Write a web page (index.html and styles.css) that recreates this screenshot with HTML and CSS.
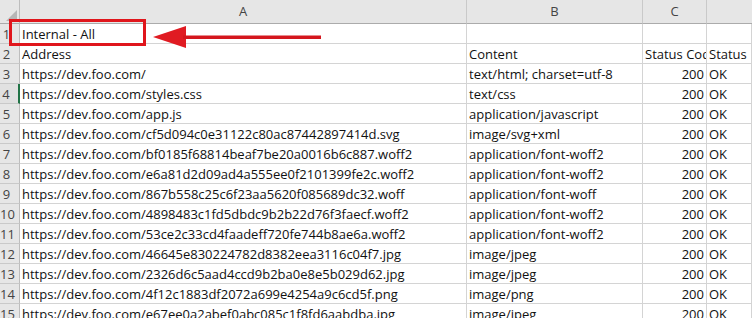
FILE: index.html
```html
<!DOCTYPE html>
<html lang="en">
<head>
  <meta charset="UTF-8">
  <title>Internal - All</title>
  <link rel="stylesheet" href="styles.css">
</head>
<body>
  <div class="sheet">
    <div class="corner"><span class="corner-mark"></span></div>
    <div class="colhead">A</div>
    <div class="colhead">B</div>
    <div class="colhead">C</div>
    <div class="colhead last"></div>

    <div class="rowhead">1</div>
    <div class="cell">Internal - All</div>
    <div class="cell"></div>
    <div class="cell"></div>
    <div class="cell"></div>

    <div class="rowhead">2</div>
    <div class="cell">Address</div>
    <div class="cell">Content</div>
    <div class="cell">Status Code</div>
    <div class="cell">Status</div>

    <div class="rowhead">3</div>
    <div class="cell">https://dev.foo.com/</div>
    <div class="cell">text/html; charset=utf-8</div>
    <div class="cell num">200</div>
    <div class="cell">OK</div>

    <div class="rowhead active">4</div>
    <div class="cell">https://dev.foo.com/styles.css</div>
    <div class="cell">text/css</div>
    <div class="cell num">200</div>
    <div class="cell">OK</div>

    <div class="rowhead">5</div>
    <div class="cell">https://dev.foo.com/app.js</div>
    <div class="cell">application/javascript</div>
    <div class="cell num">200</div>
    <div class="cell">OK</div>

    <div class="rowhead">6</div>
    <div class="cell">https://dev.foo.com/cf5d094c0e31122c80ac87442897414d.svg</div>
    <div class="cell">image/svg+xml</div>
    <div class="cell num">200</div>
    <div class="cell">OK</div>

    <div class="rowhead">7</div>
    <div class="cell">https://dev.foo.com/bf0185f68814beaf7be20a0016b6c887.woff2</div>
    <div class="cell">application/font-woff2</div>
    <div class="cell num">200</div>
    <div class="cell">OK</div>

    <div class="rowhead">8</div>
    <div class="cell">https://dev.foo.com/e6a81d2d09ad4a555ee0f2101399fe2c.woff2</div>
    <div class="cell">application/font-woff2</div>
    <div class="cell num">200</div>
    <div class="cell">OK</div>

    <div class="rowhead">9</div>
    <div class="cell">https://dev.foo.com/867b558c25c6f23aa5620f085689dc32.woff</div>
    <div class="cell">application/font-woff</div>
    <div class="cell num">200</div>
    <div class="cell">OK</div>

    <div class="rowhead">10</div>
    <div class="cell">https://dev.foo.com/4898483c1fd5dbdc9b2b22d76f3faecf.woff2</div>
    <div class="cell">application/font-woff2</div>
    <div class="cell num">200</div>
    <div class="cell">OK</div>

    <div class="rowhead">11</div>
    <div class="cell">https://dev.foo.com/53ce2c33cd4faadeff720fe744b8ae6a.woff2</div>
    <div class="cell">application/font-woff2</div>
    <div class="cell num">200</div>
    <div class="cell">OK</div>

    <div class="rowhead">12</div>
    <div class="cell">https://dev.foo.com/46645e830224782d8382eea3116c04f7.jpg</div>
    <div class="cell">image/jpeg</div>
    <div class="cell num">200</div>
    <div class="cell">OK</div>

    <div class="rowhead">13</div>
    <div class="cell">https://dev.foo.com/2326d6c5aad4ccd9b2ba0e8e5b029d62.jpg</div>
    <div class="cell">image/jpeg</div>
    <div class="cell num">200</div>
    <div class="cell">OK</div>

    <div class="rowhead">14</div>
    <div class="cell">https://dev.foo.com/4f12c1883df2072a699e4254a9c6cd5f.png</div>
    <div class="cell">image/png</div>
    <div class="cell num">200</div>
    <div class="cell">OK</div>

    <div class="rowhead">15</div>
    <div class="cell">https://dev.foo.com/e67ee0a2abef0abc085c1f8fd6aabdba.jpg</div>
    <div class="cell">image/jpeg</div>
    <div class="cell num">200</div>
    <div class="cell">OK</div>
  </div>

  <!-- annotation over the sheet -->
  <div class="mark-box"></div>
  <svg class="mark-arrow" width="172" height="24" viewBox="0 0 172 24">
    <polygon points="0,11 33,0 33,22" fill="#e01b22"/>
    <rect x="30" y="9.5" width="138" height="3.5" fill="#d4161d"/>
  </svg>
</body>
</html>
```

FILE: styles.css
```css
html, body {
  margin: 0;
  padding: 0;
  overflow: hidden;
  background: #fff;
}

body {
  font-family: 'Open Sans', sans-serif;
  font-size: 13px;
  color: #111;
}

.sheet {
  display: grid;
  grid-template-columns: 20px 447px 176px 64px 1fr;
  grid-auto-rows: 20px;
  grid-template-rows: 24px;
  width: 752px;
}

.corner,
.colhead {
  background: #e6e6e6;
  border-bottom: 1px solid #ababab;
  border-right: 1px solid #c9c9c9;
  box-sizing: border-box;
}

.corner {
  display: flex;
  justify-content: flex-end;
  align-items: flex-end;
  padding: 0 2px 2px 0;
  border-right-color: #bdbdbd;
}

.corner-mark {
  width: 11px;
  height: 11px;
  background: #b6b6b6;
  clip-path: polygon(100% 0, 100% 100%, 0 100%);
}

.colhead {
  text-align: center;
  line-height: 23px;
  color: #444;
}

.colhead.last {
  border-right: none;
}

.rowhead {
  background: #e6e6e6;
  border-right: 1px solid #bdbdbd;
  border-bottom: 1px solid #c9c9c9;
  box-sizing: border-box;
  text-align: center;
  padding: 2px 6px 0 0;
  line-height: 17px;
  color: #444;
}

.rowhead.active {
  background: #e1e1e1;
  border-right: 2px solid #217346;
}

.cell {
  border-right: 1px solid #d4d4d4;
  border-bottom: 1px solid #d4d4d4;
  box-sizing: border-box;
  padding: 2px 2px 0 2px;
  line-height: 17px;
  white-space: nowrap;
  overflow: hidden;
}

.cell.num {
  text-align: right;
}

.mark-box {
  position: absolute;
  left: 9px;
  top: 19px;
  width: 137px;
  height: 27px;
  border: 3px solid #e0161c;
  box-sizing: border-box;
}

.mark-arrow {
  position: absolute;
  left: 153px;
  top: 26px;
}
```
